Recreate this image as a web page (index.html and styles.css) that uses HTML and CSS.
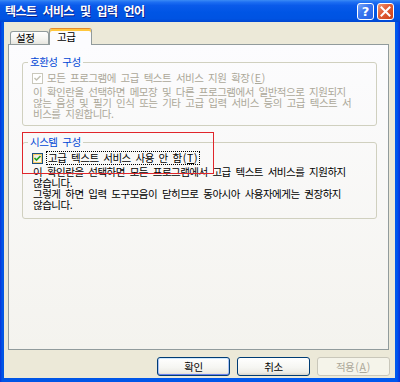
FILE: index.html
```html
<!DOCTYPE html>
<html lang="ko">
<head>
<meta charset="utf-8">
<title>텍스트 서비스 및 입력 언어</title>
<link rel="stylesheet" href="styles.css">
</head>
<body>
<div class="window">
  <div class="titlebar">
    <span class="title">텍스트 서비스 및 입력 언어</span>
    <div class="tb-buttons">
      <span class="tb-btn help">?</span>
      <span class="tb-btn close"><svg width="11" height="11" viewBox="0 0 11 11"><path d="M1.5 1.5 L9.5 9.5 M9.5 1.5 L1.5 9.5" stroke="#fff" stroke-width="2" stroke-linecap="square"/></svg></span>
    </div>
  </div>
  <div class="client">
    <div class="tabs">
      <div class="tab">설정</div>
      <div class="tab active">고급</div>
    </div>
    <div class="panel">
      <fieldset class="group disabled">
        <legend>호환성 구성</legend>
        <div class="check-row">
          <span class="cb off"><svg width="9" height="9" viewBox="0 0 9 9"><path d="M1.5 4 L3.5 6 L7.5 2" stroke="#C4C2B4" stroke-width="1.5" fill="none"/></svg></span>
          <span class="label">모든 프로그램에 고급 텍스트 서비스 지원 확장<span class="acc">(<u>E</u>)</span></span>
        </div>
        <p class="desc">이 확인란을 선택하면 메모장 및 다른 프로그램에서 일반적으로 지원되지<br>않는 음성 및 필기 인식 또는 기타 고급 입력 서비스 등의 고급 텍스트 서<br>비스를 지원합니다.</p>
      </fieldset>
      <fieldset class="group second">
        <legend>시스템 구성</legend>
        <div class="check-row">
          <span class="cb on"><svg width="9" height="9" viewBox="0 0 9 9"><path d="M1.5 4 L3.5 6 L7.5 2" stroke="#21A121" stroke-width="1.7" fill="none"/></svg></span>
          <span class="label focus">고급 텍스트 서비스 사용 안 함<span class="acc">(<u>T</u>)</span></span>
        </div>
        <p class="desc">이 확인란을 선택하면 모든 프로그램에서 고급 텍스트 서비스를 지원하지<br>않습니다.<br>그렇게 하면 입력 도구모음이 닫히므로 동아시아 사용자에게는 권장하지<br>않습니다.</p>
      </fieldset>
      <div class="annotation"></div>
    </div>
    <div class="buttons">
      <span class="btn default">확인</span>
      <span class="btn">취소</span>
      <span class="btn disabled-btn">적용<span class="acc">(<u>A</u>)</span></span>
    </div>
  </div>
</div>
</body>
</html>
```

FILE: styles.css
```css
html, body {
  margin: 0;
  padding: 0;
}
body {
  width: 400px;
  height: 382px;
  overflow: hidden;
  font-family: "Noto Sans CJK KR", "Noto Sans", sans-serif;
  font-size: 10.5px;
  letter-spacing: -0.5px;
  word-spacing: 2.3px;
  color: #000;
}
.window {
  width: 400px;
  height: 382px;
  box-sizing: border-box;
  display: flex;
  flex-direction: column;
  background: linear-gradient(to right, #0831D9 0px, #0055E5 2px, #0058EE calc(100% - 3px), #0831D9 100%);
}
.titlebar {
  height: 22px;
  flex: none;
  display: flex;
  align-items: center;
  padding: 0 6px 0 5px;
  background: linear-gradient(#3B8BF5 0%, #1D6EF2 10%, #0A5AEA 25%, #0055E5 55%, #0053E2 85%, #0046D0 100%);
}
.title {
  flex: 1;
  color: #fff;
  font-weight: bold;
  font-size: 12px;
  letter-spacing: -0.6px;
  word-spacing: 3.4px;
  line-height: 14px;
  text-shadow: 1px 1px 0 #0A1E8C;
  white-space: nowrap;
}
.tb-buttons {
  display: flex;
  gap: 3px;
}
.tb-btn {
  width: 17px;
  height: 17px;
  box-sizing: border-box;
  border: 1px solid #fff;
  border-radius: 3px;
  display: flex;
  align-items: center;
  justify-content: center;
  color: #fff;
}
.help {
  background: linear-gradient(135deg, #7CA6F7 0%, #3C78F0 40%, #2460E4 100%);
  font-family: "DejaVu Sans", sans-serif;
  font-weight: bold;
  font-size: 13px;
  letter-spacing: 0;
  line-height: 15px;
}
.close {
  background: linear-gradient(135deg, #F09A78 0%, #E2603A 40%, #CC4017 100%);
}
.client {
  flex: 1;
  margin: 0 5px 4px 4px;
  background: #ECE9D8;
  display: flex;
  flex-direction: column;
  padding: 6px 6px 2px 4px;
}
.tabs {
  height: 16px;
  flex: none;
  display: flex;
  align-items: flex-end;
  padding-left: 2px;
}
.tab {
  height: 13px;
  width: 39px;
  box-sizing: border-box;
  border: 1px solid #919B9C;
  border-bottom: none;
  border-radius: 3px 3px 0 0;
  background: linear-gradient(#FFFFFF, #F3F3EF 60%, #E6E5DE);
  line-height: 12px;
  padding-left: 5px;
  white-space: nowrap;
}
.tab.active {
  position: relative;
  z-index: 1;
  height: 17px;
  width: 43px;
  margin-bottom: -1px;
  padding-left: 7px;
  background: #FCFCFE;
  border-top: 1px solid #E68B2C;
  box-shadow: inset 0 2px 0 #FFC73C;
  padding-top: 2px;
  line-height: 12px;
}
.panel {
  position: relative;
  height: 306px;
  flex: none;
  box-sizing: border-box;
  border: 1px solid #919B9C;
  background: linear-gradient(#FCFCFE, #F4F3EE);
  padding: 11px 11px 0 13px;
}
.group {
  margin: 0;
  border: 1px solid #D0D0BF;
  border-radius: 3px;
  padding: 4px 8px 6px 10px;
  min-width: 0;
}
.group legend {
  color: #0046D5;
  line-height: 12px;
  padding: 0 2px;
  margin-left: -5px;
}
.group.second {
  margin-top: 10px;
  padding-bottom: 8px;
}
.check-row {
  display: flex;
  align-items: center;
  height: 12px;
  gap: 4px;
  margin-left: -1px;
}
.cb {
  width: 11px;
  height: 11px;
  box-sizing: border-box;
  display: flex;
  align-items: center;
  justify-content: center;
  flex: none;
}
.cb.off {
  border: 1px solid #CAC8BB;
  background: #FFFFFF;
}
.cb.on {
  border: 1px solid #1C5180;
  background: linear-gradient(135deg, #E8E6DC, #FFFFFF);
  box-shadow: inset 0 0 0 1px #F8CB66;
}
.label {
  white-space: nowrap;
  line-height: 12px;
}
.acc {
  letter-spacing: 0.8px;
  margin-left: 1px;
}
.label.focus {
  outline: 1px dotted #000;
  outline-offset: 0px;
  padding: 0 1px;
}
.disabled .label,
.disabled .desc {
  color: #ACA899;
}
.desc {
  margin: 2px 0 0 0;
  line-height: 11px;
  white-space: nowrap;
}
.annotation {
  position: absolute;
  left: 13px;
  top: 87px;
  width: 192px;
  height: 42px;
  box-sizing: border-box;
  border: 1px solid #E0262B;
  pointer-events: none;
}
.buttons {
  flex: none;
  margin-top: 7px;
  height: 19px;
  display: flex;
  justify-content: flex-end;
  gap: 7px;
  margin-right: -1px;
}
.btn {
  width: 73px;
  height: 19px;
  box-sizing: border-box;
  border: 1px solid #003C74;
  border-radius: 3px;
  background: linear-gradient(#FFFFFF 0%, #F6F6F2 55%, #ECEBE5 85%, #D8D4CA 100%);
  display: flex;
  align-items: center;
  justify-content: center;
  line-height: 12px;
  white-space: nowrap;
}
.btn.default {
  box-shadow: inset 0 1px 0 #CEE7FF, inset 0 -1px 0 #6982EE, inset 1px 0 0 #A9C2F6, inset -1px 0 0 #A9C2F6;
}
.btn.disabled-btn {
  border-color: #C9C7BA;
  background: #F5F4EA;
  color: #ACA899;
}
```
